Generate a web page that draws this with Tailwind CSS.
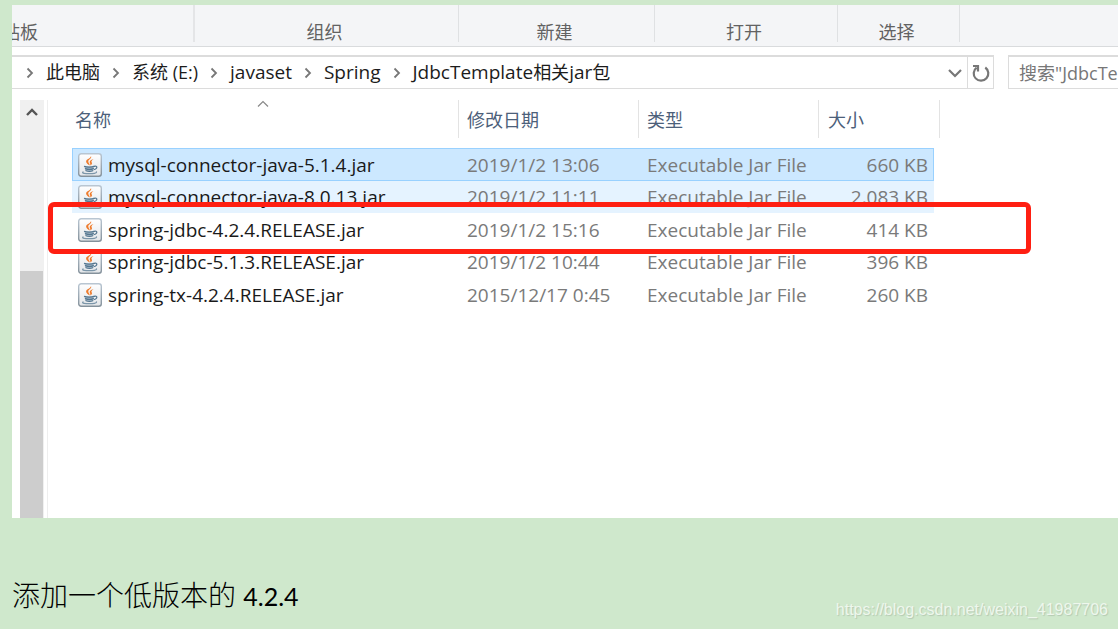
<!DOCTYPE html>
<html lang="zh-CN">
<head>
<meta charset="utf-8">
<title>JdbcTemplate相关jar包</title>
<meta name="viewport" content="width=device-width, initial-scale=1">
<script src="https://cdn.jsdelivr.net/npm/@tailwindcss/browser@4"></script>
</head>
<body class="flex min-h-screen flex-col overflow-x-hidden bg-[#cfe8cc] font-['Open_Sans','Noto_Sans_CJK_SC',sans-serif]">
<svg class="absolute h-0 w-0" aria-hidden="true">
  <defs>
    <linearGradient id="tile" x1="0" y1="0" x2="0" y2="1">
      <stop offset="0" stop-color="#ffffff"/><stop offset="1" stop-color="#e3e6e9"/>
    </linearGradient>
    <linearGradient id="edge" x1="0" y1="0" x2="0" y2="1">
      <stop offset="0" stop-color="#b9c6d2"/><stop offset="1" stop-color="#84919b"/>
    </linearGradient>
    <symbol id="jar" viewBox="0 0 24 24">
      <rect x=".7" y=".7" width="22.6" height="22.6" rx="2.5" fill="url(#tile)" stroke="url(#edge)" stroke-width="1.4"/>
      <path d="M13 3c1.200 2.600-2.700 3.300-2.700 5.600 0 1.400 1.300 2.200 1.500 4-1.700-1.100-3.900-2.300-3.700-4.300C8.400 5.800 12.800 5.600 13 3Z" fill="#ee7b2c"/>
      <path d="M15.600 6c-2.100.4-4.200 1.700-3.900 3.300.2 1 1.100 1.500.4 3.300 2-1 2.300-2.300 1.500-3.400-.6-.9.400-2.200 2-3.200Z" fill="#ee7b2c"/>
      <path d="M6.500 13.500h9.500l-.8 4.200c-1.800.8-6 .8-7.800 0Z" fill="#a9bac8"/>
      <path d="M6.500 13.400c2 .9 7.500.8 9.500 0M7.400 15.600c2 .8 6.200.8 8 0M8 17.700c1.800.7 5 .7 6.800 0" fill="none" stroke="#557790" stroke-width="1.200" stroke-linecap="round"/>
      <path d="M16.200 13.400c3.300-1.200 3.600 2.200.2 3.100" fill="none" stroke="#557790" stroke-width="1.200" stroke-linecap="round"/>
      <path d="M5 19c-1.600 1.300 2.600 1.700 6.300 1.700s7.500-.6 7.200-1.700" fill="none" stroke="#7c96a9" stroke-width="1.300" stroke-linecap="round"/>
    </symbol>
    <symbol id="next" viewBox="0 0 8 12"><path d="M1.500 1.500 6 6l-4.500 4.500" fill="none" stroke="#777" stroke-width="1.800"/></symbol>
  </defs>
</svg>

<main class="mt-[5px] ml-3 overflow-hidden bg-white">
  <div class="flex h-[42px] border-b border-[#d9dbdd] bg-[#f4f5f7] text-lg leading-5 text-[#626262]">
    <div class="mb-1 flex w-[183px] shrink-0 items-end justify-end overflow-hidden border-r-2 border-[#e4e5e7] pr-[155px] whitespace-nowrap"><span>剪贴板</span></div>
    <div class="mb-1 flex w-[264px] shrink-0 items-end justify-center border-r border-[#dfe1e3] pr-1">组织</div>
    <div class="mb-1 flex w-[196px] shrink-0 items-end justify-center border-r border-[#dfe1e3] pr-1">新建</div>
    <div class="mb-1 flex w-[183px] shrink-0 items-end justify-center border-r border-[#dfe1e3] pr-1">打开</div>
    <div class="mb-1 flex w-[122px] shrink-0 items-end justify-center border-r border-[#dfe1e3] pr-1">选择</div>
  </div>

  <div class="mt-2 flex h-[34px] text-lg leading-7">
    <nav aria-label="路径" class="flex min-w-0 flex-1 items-center border border-l-0 border-t-2 border-[#dcdcdc] pl-3.5 whitespace-nowrap text-[#1c1c1c]">
      <svg class="mr-3 h-3 w-2 shrink-0"><use href="#next"/></svg>
      <button type="button" class="pb-0.5">此电脑</button>
      <svg class="mx-3 h-3 w-2 shrink-0"><use href="#next"/></svg>
      <button type="button" class="pb-0.5">系统 (E:)</button>
      <svg class="mx-3 h-3 w-2 shrink-0"><use href="#next"/></svg>
      <button type="button" class="pb-0.5 text-[19px]">javaset</button>
      <svg class="mx-3 h-3 w-2 shrink-0"><use href="#next"/></svg>
      <button type="button" class="pb-0.5 text-[19px]">Spring</button>
      <svg class="mx-3 h-3 w-2 shrink-0"><use href="#next"/></svg>
      <button type="button" class="pb-0.5 text-[19px]">JdbcTemplate<span class="text-lg">相关</span>jar<span class="text-lg">包</span></button>
      <button type="button" aria-label="展开" class="ml-auto flex h-full w-6 items-center justify-center">
        <svg class="h-3 w-4" viewBox="0 0 16 12"><path d="m2 3 6 6 6-6" fill="none" stroke="#777" stroke-width="2.200"/></svg>
      </button>
      <button type="button" aria-label="刷新" class="flex h-full w-[26px] items-center justify-center border-l border-[#dcdcdc]">
        <svg class="h-5 w-5" viewBox="0 0 20 20" fill="none" stroke="#777" stroke-width="2.200"><path d="M14.300 4.500A7.300 7.300 0 1 1 5.600 4.600"/><path d="M2 3h5v5.500"/></svg>
      </button>
    </nav>
    <input type="text" aria-label="搜索" placeholder='搜索"JdbcTemplate相关jar包"' class="ml-3.5 w-[110px] shrink-0 border border-r-0 border-t-2 border-[#dcdcdc] pl-2.5 text-[#777] outline-none placeholder:text-[#777]">
  </div>

  <div class="flex h-[429px] pt-[11px]">
    <div class="ml-2 flex w-6 shrink-0 flex-col bg-[#f0f0f0]">
      <button type="button" aria-label="向上滚动" class="flex h-6 items-center justify-center">
        <svg class="h-3 w-4" viewBox="0 0 16 12"><path d="m3 9 5-5 5 5" fill="none" stroke="#555" stroke-width="2.400"/></svg>
      </button>
      <div class="mt-[147px] mr-px flex-1 bg-[#cdcdcd]"></div>
    </div>
    <div class="relative ml-[3px] min-w-0 flex-1 border-l border-[#eee] pl-6">
      <table class="w-[868px] table-fixed border-separate border-spacing-0 text-[19px] leading-6 whitespace-nowrap text-[#7a7a7a]">
        <colgroup><col class="w-[387px]"><col class="w-[180px]"><col class="w-[180px]"><col class="w-[115px]"><col class="w-1.5"></colgroup>
        <thead class="text-left text-lg text-[#4c607a]">
          <tr class="h-[38px]">
            <th class="relative border-r border-[#e3e3e3] pt-0.5 pl-[3px] font-normal">名称
              <svg class="absolute top-0 left-1/2 -ml-2 h-2 w-3" viewBox="0 0 12 8"><path d="m1 6.500 5-5 5 5" fill="none" stroke="#888" stroke-width="1.200"/></svg>
            </th>
            <th class="border-r border-[#e3e3e3] pt-0.5 pl-2 font-normal">修改日期</th>
            <th class="border-r border-[#e3e3e3] pt-0.5 pl-2 font-normal">类型</th>
            <th colspan="2" class="border-r border-[#e3e3e3] pt-0.5 pl-[9px] font-normal">大小</th>
          </tr>
        </thead>
        <tbody>
          <tr class="h-2.5"><td colspan="5"></td></tr>
          <tr class="h-[33px]">
            <td class="border border-r-0 border-[#99d1ff] bg-[#cce8ff] pl-[5px] text-[#1a1a1a]"><div class="flex items-center gap-1.5"><svg class="h-6 w-6"><use href="#jar"/></svg>mysql-connector-java-5.1.4.jar</div></td>
            <td class="border-y border-[#99d1ff] bg-[#cce8ff] pl-2">2019/1/2 13:06</td>
            <td class="border-y border-[#99d1ff] bg-[#cce8ff] pl-2">Executable Jar File</td>
            <td class="border border-l-0 border-[#99d1ff] bg-[#cce8ff] pr-[5px] text-right">660 KB</td><td></td>
          </tr>
          <tr class="h-8">
            <td class="bg-[#e5f3ff] pl-1.5 text-[#1a1a1a]"><div class="flex items-center gap-1.5"><svg class="h-6 w-6"><use href="#jar"/></svg>mysql-connector-java-8.0.13.jar</div></td>
            <td class="bg-[#e5f3ff] pl-2">2019/1/2 11:11</td>
            <td class="bg-[#e5f3ff] pl-2">Executable Jar File</td>
            <td class="bg-[#e5f3ff] pr-1.5 text-right">2,083 KB</td><td></td>
          </tr>
          <tr class="h-[33px]">
            <td class="pl-1.5 text-[#1a1a1a]"><div class="flex items-center gap-1.5"><svg class="h-6 w-6"><use href="#jar"/></svg>spring-jdbc-4.2.4.RELEASE.jar</div></td>
            <td class="pl-2">2019/1/2 15:16</td>
            <td class="pl-2">Executable Jar File</td>
            <td class="pr-1.5 text-right">414 KB</td><td></td>
          </tr>
          <tr class="h-8">
            <td class="pl-1.5 text-[#1a1a1a]"><div class="flex items-center gap-1.5"><svg class="h-6 w-6"><use href="#jar"/></svg>spring-jdbc-5.1.3.RELEASE.jar</div></td>
            <td class="pl-2">2019/1/2 10:44</td>
            <td class="pl-2">Executable Jar File</td>
            <td class="pr-1.5 text-right">396 KB</td><td></td>
          </tr>
          <tr class="h-[33px]">
            <td class="pl-1.5 text-[#1a1a1a]"><div class="flex items-center gap-1.5"><svg class="h-6 w-6"><use href="#jar"/></svg>spring-tx-4.2.4.RELEASE.jar</div></td>
            <td class="pl-2">2015/12/17 0:45</td>
            <td class="pl-2">Executable Jar File</td>
            <td class="pr-1.5 text-right">260 KB</td><td></td>
          </tr>
        </tbody>
      </table>
      <div class="pointer-events-none absolute top-[102px] left-0 h-[52px] w-[983px] rounded-md border-[5px] border-[#ff1f12]"></div>
    </div>
  </div>
</main>

<footer class="relative flex-1">
  <p class="pt-[59px] pl-3 text-[28px] leading-9 font-light text-black">添加一个低版本的 <span class="font-['Lato'] text-[25px] font-normal">4.2.4</span></p>
  <a href="https://blog.csdn.net/weixin_41987706" class="absolute right-2.5 bottom-[7px] font-['Liberation_Sans',sans-serif] text-base leading-6 text-[#eef7ed] [text-shadow:1px_1px_1px_#b4c9b2]">https://blog.csdn.net/weixin_41987706</a>
</footer>
</body>
</html>
